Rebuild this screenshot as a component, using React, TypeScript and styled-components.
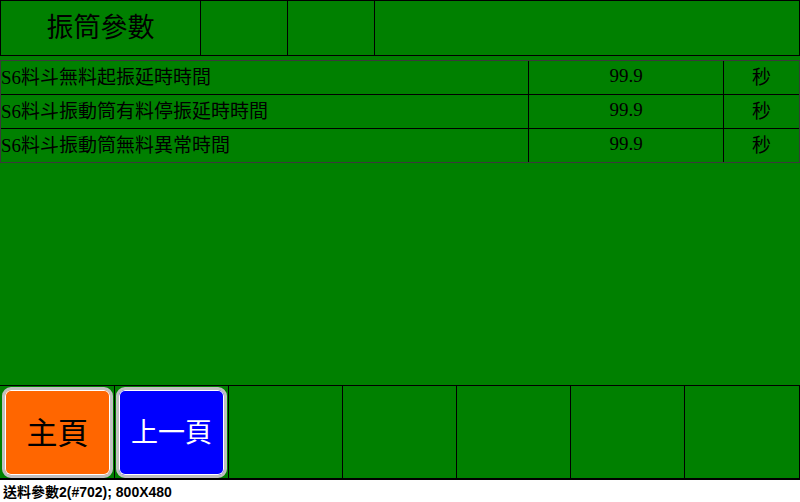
import React from "react";
import styled, { createGlobalStyle } from "styled-components";

const Global = createGlobalStyle`
  html, body { margin: 0; padding: 0; background: #ffffff; }
  body { width: 800px; height: 502px; overflow: hidden; }
`;

const FONT = `"Liberation Serif", "Noto Sans CJK TC", serif`;

const Page = styled.div`
  width: 800px;
  height: 502px;
  display: flex;
  flex-direction: column;
`;

const Screen = styled.div`
  width: 800px;
  height: 480px;
  background: #008000;
  display: flex;
  flex-direction: column;
  box-sizing: border-box;
`;

const Header = styled.div`
  height: 56px;
  box-sizing: border-box;
  border: 1px solid #000;
  display: grid;
  grid-template-columns: 199px 87px 87px 1fr;
`;

const HeaderCell = styled.div<{ $first?: boolean }>`
  border-left: ${(p) => (p.$first ? "none" : "1px solid #000")};
  display: flex;
  align-items: center;
  justify-content: center;
  font-family: ${FONT};
  font-size: 27px;
  color: #000;
  padding-bottom: 5px;
`;

const Table = styled.div`
  margin-top: 4px;
  box-sizing: border-box;
  border: 1px solid #3a3a3a;
  display: flex;
  flex-direction: column;
`;

const Row = styled.div<{ $last?: boolean }>`
  height: 33px;
  display: grid;
  grid-template-columns: 527px 195px 1fr;
  border-bottom: ${(p) => (p.$last ? "none" : "1px solid #000")};
  font-family: ${FONT};
  font-size: 19px;
  color: #000;
`;

const Cell = styled.div<{ $align: "left" | "center"; $divider?: boolean }>`
  display: flex;
  align-items: center;
  justify-content: ${(p) => (p.$align === "left" ? "flex-start" : "center")};
  border-left: ${(p) => (p.$divider ? "1px solid #000" : "none")};
  padding-bottom: 4px;
  white-space: nowrap;
  overflow: hidden;
`;

const Spacer = styled.div`
  flex: 1;
`;

const Footer = styled.div`
  height: 95px;
  box-sizing: border-box;
  border-top: 1px solid #000;
  border-bottom: 2px solid #000;
  border-right: 1px solid #000;
  display: grid;
  grid-template-columns: repeat(6, 114px) 1fr;
`;

const FootCell = styled.div<{ $first?: boolean }>`
  border-left: ${(p) => (p.$first ? "none" : "1px solid #000")};
  display: flex;
  padding: 0 1px 0 ${(p) => (p.$first ? "2px" : "1px")};
  box-sizing: border-box;
`;

const Button = styled.div<{ $bg: string; $fg: string; $size: number }>`
  flex: 1;
  margin: 1px 0 0 0;
  box-sizing: border-box;
  border: 3px solid #c0c0c0;
  border-radius: 9px;
  box-shadow: inset 0 0 0 1px #ffffff;
  background: ${(p) => p.$bg};
  color: ${(p) => p.$fg};
  font-family: ${FONT};
  font-size: ${(p) => p.$size}px;
  display: flex;
  align-items: center;
  justify-content: center;
  padding-bottom: 4px;
`;

const Status = styled.div`
  height: 22px;
  padding-left: 3px;
  display: flex;
  align-items: center;
  font-family: "Liberation Sans", "Noto Sans CJK TC", sans-serif;
  font-weight: bold;
  font-size: 14px;
  color: #000;
`;

const rows = [
  "S6料斗無料起振延時時間",
  "S6料斗振動筒有料停振延時時間",
  "S6料斗振動筒無料異常時間",
];

export default function App() {
  return (
    <Page>
      <Global />
      <Screen>
        <Header>
          <HeaderCell $first>振筒參數</HeaderCell>
          <HeaderCell />
          <HeaderCell />
          <HeaderCell />
        </Header>
        <Table>
          {rows.map((r, i) => (
            <Row key={r} $last={i === rows.length - 1}>
              <Cell $align="left">{r}</Cell>
              <Cell $align="center" $divider>
                99.9
              </Cell>
              <Cell $align="center" $divider>
                秒
              </Cell>
            </Row>
          ))}
        </Table>
        <Spacer />
        <Footer>
          <FootCell $first>
            <Button $bg="#ff6600" $fg="#000" $size={31}>
              主頁
            </Button>
          </FootCell>
          <FootCell>
            <Button $bg="#0000ff" $fg="#fff" $size={27}>
              上一頁
            </Button>
          </FootCell>
          <FootCell />
          <FootCell />
          <FootCell />
          <FootCell />
          <FootCell />
        </Footer>
      </Screen>
      <Status>送料參數2(#702); 800X480</Status>
    </Page>
  );
}
